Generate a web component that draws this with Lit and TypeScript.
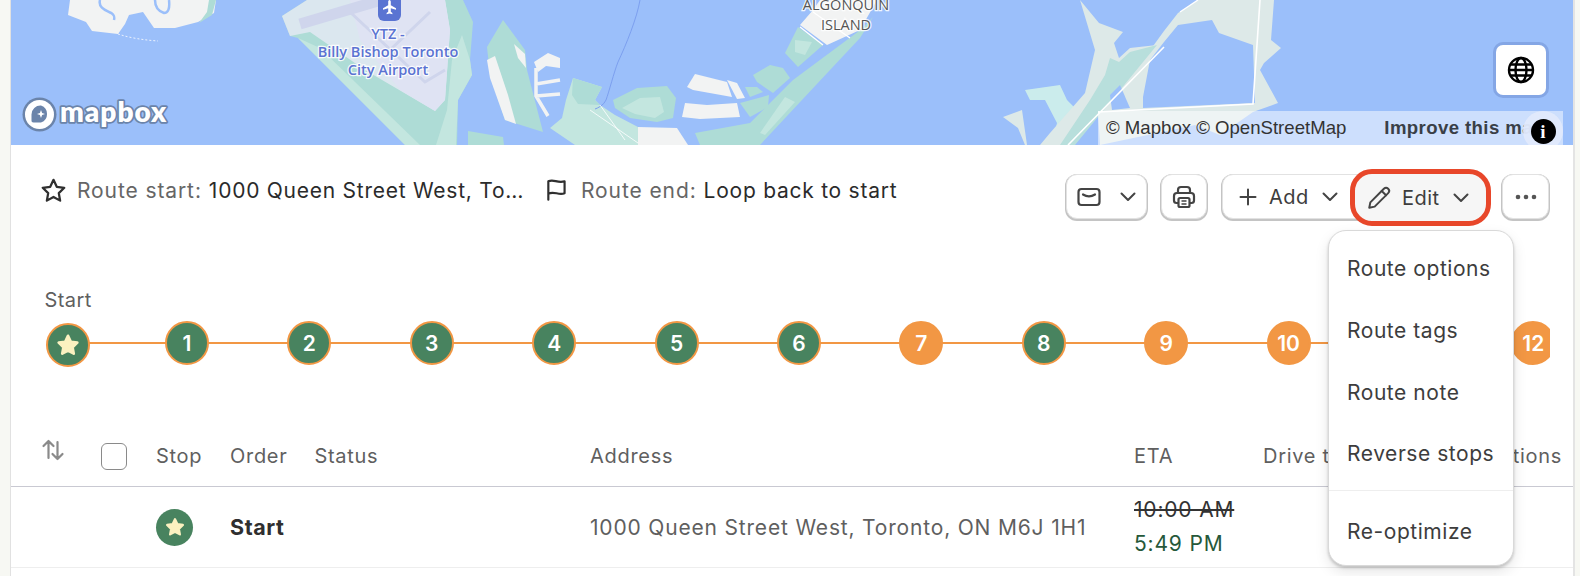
import { LitElement, html, css, svg } from "lit";
import { customElement } from "lit/decorators.js";

type Poly = [string, string];

const LAND = "#f2f3f3";
const GREEN = "#aedcd6";
const GREEN2 = "#c3e6df";
const PALE = "#dde9e8";
const WATER = "#9bbffa";

const SHAPES: Poly[] = [
  [LAND, "70,0 68,15 86,22 92,31 118,34 125,24 129,15 143,12 154,28 175,28 198,22 214,13 216,0"],
  [GREEN, "199,23 212,15 216,0 209,0 207,12"],
  [GREEN, "282,16 290,36 298,38 405,145 457,145 458,100 472,75 470,60 473,22 463,0 307,0"],
  [GREEN2, "298,38 405,145 420,145 320,48"],
  ["#dbe7ef", "282,16 290,36 310,32 365,70 435,111 445,100 450,30 445,0 307,0"],
  ["#dfe3f3", "350,0 445,0 450,30 445,100 435,111 400,90 360,40"],
  [GREEN2, "436,145 456,145 458,100 472,75 470,60 462,35 452,60 447,110"],
  [GREEN, "468,131 503,137 504,145 468,145"],
  [GREEN, "487,47 503,20 525,50 527,70 543,132 505,120 490,75"],
  [LAND, "487,60 495,56 508,95 516,124 505,120 490,78"],
  [LAND, "514,44 525,54 526,68 518,58"],
  [LAND, "534,62 548,53 560,58 560,68 546,66 538,72"],
  [GREEN2, "573,78 602,87 595,100 600,105 615,115 638,127 638,145 575,145 550,128 562,118 566,100"],
  [GREEN, "573,78 602,87 595,100 600,105 578,104 572,95"],
  [GREEN, "613,100 637,88 667,86 676,98 673,118 657,122 630,118 615,108"],
  [GREEN2, "622,108 640,98 660,97 664,112 655,118 635,114"],
  [LAND, "687,87 695,74 727,82 732,97 693,90"],
  [LAND, "727,80 737,83 745,98 737,99"],
  [LAND, "685,103 707,105 737,103 740,117 700,119 682,117"],
  [GREEN, "745,87 757,87 763,92 750,97"],
  [GREEN, "740,103 769,95 768,107 750,117"],
  [GREEN, "753,75 770,65 783,68 790,78 773,93 757,82"],
  [GREEN, "695,133 750,123 793,80 863,28 873,17 860,38 830,70 760,145 700,145"],
  [GREEN2, "760,133 785,97 795,102 765,135"],
  [LAND, "638,127 677,128 688,145 638,145"],
  [LAND, "800,25 813,10 820,0 877,0 860,30 827,45"],
  [GREEN, "798,27 823,45 798,67 785,53"],
  [GREEN2, "795,40 812,42 805,55 795,52"],
  ["#cbecec", "1025,90 1060,85 1067,100 1080,113 1072,145 1052,145 1057,123 1045,100 1030,100"],
  [PALE, "1003,117 1022,110 1027,145 1025,145 1018,128"],
  [PALE, "1164,31 1178,13 1198,0 1274,0 1271,40 1281,48 1264,63 1260,70 1278,103 1253,112 1100,112 1143,60"],
  [WATER, "1143,97 1150,60 1164,42 1178,25 1212,20 1219,33 1253,45 1255,103 1143,108"],
  [PALE, "1080,0 1099,23 1123,32 1114,43 1119,58 1130,48 1157,45 1068,145 1040,145 1050,133 1085,93 1095,50"],
  ["#b8dfdc", "1060,145 1090,100 1105,75 1110,58 1119,62 1130,52 1157,45 1075,145"],
  [WATER, "1110,95 1120,85 1130,108 1112,110"],
  [PALE, "1098,112 1253,112 1220,135 1195,125 1100,145"],
];

const MAP = svg`
  <svg class="mapsvg" viewBox="11 0 1562 145" width="1562" height="145" preserveAspectRatio="none">
    <rect x="11" y="0" width="1562" height="145" fill="${WATER}"></rect>
    ${SHAPES.map(([f, p]) => svg`<polygon fill="${f}" points="${p}"></polygon>`)}
    <path d="M100 0c-2 7 5 10 9 12 5 2 6 4 5 8M155 0c0 6 3 11 9 13 4 0 6-4 5-13" fill="none" stroke="${WATER}" stroke-width="2.500"></path>
    <path d="M118 34c12 4 26 6 40 7" fill="none" stroke="#fff" stroke-width="1" stroke-dasharray="2 2" opacity=".8"></path>
    <path d="M300 24 395 -4" stroke="#cfd5ec" stroke-width="11" fill="none"></path>
    <path d="M350 12 425 82 445 70M390 50 430 12" stroke="#cfd5ec" stroke-width="3" fill="none"></path>
    <path d="M536 68V96L548 116M536 84 560 80M536 96 560 94" stroke="${LAND}" stroke-width="3.500" fill="none"></path>
    <path d="M640 0c-3 18-14 45-22 62-4 10-9 30-12 38-2 5-8 8-11 9" stroke="#7c9fef" stroke-width="1" fill="none"></path>
    <path d="M590 110 638 143M600 105 625 140" stroke="#fff" stroke-width="1" fill="none" opacity=".8"></path>
    <path d="M800 27 823 45M813 12 850 38" stroke="#fff" stroke-width="1.400" fill="none"></path>
    <path d="M1068 145 1164 47M1098 112 1253 104 1260 0" stroke="#fff" stroke-width="1.600" fill="none"></path>
    <path d="M1180 12 1198 0" stroke="#fff" stroke-width="1.400" fill="none"></path>
    <rect x="378" y="-7" width="23" height="28" rx="6" fill="#5a74d2"></rect>
    <path d="M389.500 0c1 0 1.300 1 1.300 2v3.200l5.200 3v1.600l-5.200-1.500v3.400l1.600 1.300v1.200l-2.900-.8-2.900.8v-1.200l1.600-1.300V8.300L383 9.800V8.200l5.200-3V2c0-1 .3-2 1.300-2z" fill="#fff"></path>
    <g class="airport">
      <text x="388" y="39">YTZ -</text>
      <text x="388" y="57">Billy Bishop Toronto</text>
      <text x="388" y="75">City Airport</text>
    </g>
    <g class="island">
      <text x="846" y="10">ALGONQUIN</text>
      <text x="846" y="30">ISLAND</text>
    </g>
    <circle cx="39.500" cy="114.500" r="17" fill="#6b84aa"></circle>
    <circle cx="39.500" cy="114.500" r="14.500" fill="#fff"></circle>
    <path d="M41 105.500a9 9 0 0 1 0 17H33.500c-1.500 0-2-1-2-2v-6a9 9 0 0 1 9.500-9z" fill="#6b84aa"></path>
    <path d="M41 110l1.100 2.900 2.900 1.100-2.900 1.100-1.100 2.900-1.100-2.900-2.900-1.100 2.900-1.100z" fill="#fff"></path>
    <text class="mapbox" x="60" y="122">mapbox</text>
  </svg>
`;

const starOutline = html`<svg width="27" height="27" viewBox="0 0 24 24" fill="none" stroke="#2f2f2f" stroke-width="2" stroke-linejoin="round"><path d="M12 2.500l2.900 6.200 6.700.9-4.900 4.700 1.200 6.700-5.900-3.300-5.900 3.300 1.200-6.700L2.400 9.600l6.700-.9z"></path></svg>`;
const flag = html`<svg width="26" height="26" viewBox="0 0 24 24" fill="none" stroke="#2f2f2f" stroke-width="2" stroke-linecap="round" stroke-linejoin="round"><path d="M4 21V4c5-2.600 8 2 15 0v11c-5.500 2.300-10-2.500-15 .5"></path></svg>`;
const chevron = html`<svg class="chev" width="16" height="10" viewBox="0 0 16 10" fill="none" stroke="#444" stroke-width="2" stroke-linecap="round" stroke-linejoin="round"><path d="M1.500 1.500 8 8l6.500-6.500"></path></svg>`;
const mail = html`<svg width="24" height="20" viewBox="0 0 24 20" fill="none" stroke="#444" stroke-width="2.200" stroke-linejoin="round" stroke-linecap="round"><rect x="1.500" y="2" width="21" height="16" rx="3"></rect><path d="M6 7.500c4 2.600 8 2.600 12 0"></path></svg>`;
const printer = html`<svg width="24" height="24" viewBox="0 0 24 24" fill="none" stroke="#444" stroke-width="2.200" stroke-linejoin="round"><path d="M6 8V5a3 3 0 0 1 3-3h6a3 3 0 0 1 3 3v3"></path><path d="M6 18H4.500A2.500 2.500 0 0 1 2 15.500V11a3 3 0 0 1 3-3h14a3 3 0 0 1 3 3v4.500a2.500 2.500 0 0 1-2.500 2.500H18"></path><rect x="6.500" y="13" width="11" height="9" rx="1.500"></rect><path d="M9.500 16h5M9.500 19h5" stroke-width="1.600"></path></svg>`;
const plus = html`<svg width="18" height="18" viewBox="0 0 18 18" stroke="#444" stroke-width="2" stroke-linecap="round"><path d="M9 1.500v15M1.500 9h15"></path></svg>`;
const pencil = html`<svg width="26" height="26" viewBox="0 0 24 24" fill="none" stroke="#444" stroke-width="1.800" stroke-linejoin="round" stroke-linecap="round"><path d="M3 21l1-5L16.500 3.500a2.800 2.800 0 0 1 4 4L8 20z"></path><path d="M14.500 5.500l4 4"></path></svg>`;
const dots = html`<svg width="24" height="6" viewBox="0 0 24 6" fill="#555"><circle cx="4" cy="3" r="2.300"></circle><circle cx="12" cy="3" r="2.300"></circle><circle cx="20" cy="3" r="2.300"></circle></svg>`;
const sort = html`<svg width="24" height="24" viewBox="0 0 24 24" fill="none" stroke="#8a8a8a" stroke-width="2.200" stroke-linecap="round" stroke-linejoin="round"><path d="M7.500 20V3M2.500 8l5-5 5 5M16.500 4v17M11.500 16l5 5 5-5"></path></svg>`;
const kebab = html`<svg width="6" height="26" viewBox="0 0 6 26" fill="#777"><circle cx="3" cy="3" r="2.600"></circle><circle cx="3" cy="13" r="2.600"></circle><circle cx="3" cy="23" r="2.600"></circle></svg>`;
const globe = html`<svg width="28" height="28" viewBox="0 0 28 28" fill="none" stroke="#000" stroke-width="2.400"><circle cx="14" cy="14" r="12"></circle><ellipse cx="14" cy="14" rx="5.500" ry="12"></ellipse><path d="M2 14h24M3.500 8.500h21M3.500 19.500h21"></path></svg>`;
const solidStar = (s: number) => html`<svg width="${s}" height="${s}" viewBox="0 0 24 24" fill="#fbf1c0" stroke="#fbf1c0" stroke-width="2.500" stroke-linejoin="round"><path d="M12 3.500l2.600 5.500 6 .8-4.400 4.200 1.100 6-5.300-2.900-5.300 2.900 1.100-6-4.400-4.200 6-.8z"></path></svg>`;

const STOPS: [string, boolean][] = [
  ["1", false], ["2", false], ["3", false], ["4", false], ["5", false], ["6", false],
  ["7", true], ["8", false], ["9", true], ["10", true], ["11", true], ["12", true],
];

@customElement("app-root")
export class AppRoot extends LitElement {
  static styles = css`
    :host { display: block; width: 1580px; height: 576px; overflow: hidden; background: #f7f8f3; font-family: Inter, "Liberation Sans", sans-serif; color: #333; }
    .panel { position: relative; margin-left: 10px; width: 1562px; height: 576px; background: #fff; border-left: 1.500px solid #e1e1e1; border-right: 2px solid #e4e4e4; box-sizing: content-box; }
    .map { position: relative; height: 145px; overflow: hidden; background: #9bbffa; }
    .mapsvg { display: block; }
    .airport text { font: 600 14.500px "Open Sans", sans-serif; fill: #5b73d2; text-anchor: middle; paint-order: stroke; stroke: #fff; stroke-width: 2.500px; stroke-opacity: .85; }
    .island text { font: 500 14.500px "Open Sans", sans-serif; fill: #555; text-anchor: middle; paint-order: stroke; stroke: #fff; stroke-width: 2.500px; stroke-opacity: .85; }
    .mapbox { font: 800 28px Lato, sans-serif; fill: #fff; paint-order: stroke; stroke: #6b84aa; stroke-width: 3.500px; stroke-linejoin: round; letter-spacing: 1px; }
    .attrib { position: absolute; right: 10px; bottom: 0; width: 465px; height: 34px; box-sizing: border-box; padding-left: 8px; display: flex; align-items: center; gap: 38px; overflow: hidden; background: rgba(255,255,255,.5); font: 18.600px "Liberation Sans", sans-serif; color: #333; white-space: nowrap; }
    .attrib b { color: #3a3f47; letter-spacing: .4px; }
    .info { position: absolute; right: 10px; bottom: -6px; width: 40px; height: 40px; border-radius: 50%; background: rgba(225,233,252,.96); display: flex; align-items: center; justify-content: center; }
    .info i { width: 25px; height: 25px; border-radius: 50%; background: #000; color: #fff; font: 700 19px/25px "Liberation Serif", serif; text-align: center; }
    .globe { position: absolute; right: 27px; top: 45px; width: 50px; height: 50px; box-sizing: border-box; border-radius: 7px; background: #fff; box-shadow: 0 0 0 3px rgba(90,120,190,.35); display: flex; align-items: center; justify-content: center; }

    .toolbar { display: flex; justify-content: space-between; padding: 29px 24px 0 29px; height: 45px; }
    .route { display: flex; align-items: center; height: 32px; font-size: 21px; white-space: nowrap; }
    .route .ic { display: flex; }
    .r1 .ic { margin-right: 10px; }
    .r2 .ic { margin-right: 11px; }
    .route .lbl { color: #666; margin-right: 7px; letter-spacing: .9px; }
    .route .val { color: #2b2b2b; letter-spacing: .75px; }
    .r1 { width: 504px; }
    .r1 .val { overflow: hidden; text-overflow: ellipsis; width: 318px; }
    .routes { display: flex; }
    .actions { display: flex; align-items: center; }
    .btn { height: 45px; box-sizing: border-box; display: flex; align-items: center; background: #fff; border: 1px solid #e2e2e2; border-radius: 11px; box-shadow: 0 1px 0 1px #c4c4c4; font-size: 20px; letter-spacing: .5px; color: #3d3d3d; }
    .mailbtn { width: 81px; padding-left: 10px; gap: 19px; margin-right: 14px; }
    .printbtn { width: 46px; justify-content: center; margin-right: 15px; }
    .addbtn { width: 140px; padding-left: 16px; border-radius: 11px 0 0 11px; }
    .addbtn span { margin: 0 13px 0 12px; }
    .editwrap { margin-left: -12px; margin-right: 11px; margin-top: 2px; position: relative; z-index: 1; }
    .editbtn { width: 141px; height: 57px; border: 5px solid #e8472a; border-radius: 22px; background: #f6f6f6; box-shadow: none; padding-left: 11px; }
    .editbtn span { margin: 0 13px 0 10px; }
    .morebtn { width: 47px; justify-content: center; }

    .timeline { margin-top: 71px; padding-left: 33.500px; width: 1505px; overflow: hidden; box-sizing: content-box; }
    .tl-label { font-size: 20px; letter-spacing: .4px; color: #5f5f5f; height: 20px; line-height: 20px; }
    .track { position: relative; display: flex; margin-top: 9px; height: 48px; align-items: center; }
    .line { position: absolute; left: 24px; right: 0; top: 23px; height: 2px; background: #f29744; }
    .dot { position: relative; flex: none; width: 44px; height: 44px; box-sizing: border-box; border-radius: 50%; display: flex; align-items: center; justify-content: center; background: #48835f; color: #fff; border: 2px solid #f29744; font-size: 21px; font-weight: 600; margin-right: 78.400px; }
    .dot.late { background: #f29744; }
    .dot.first { margin: 3px 75px 0 1.500px; }

    .row { display: grid; grid-template-columns: 60px 55px 74px 84.500px 275.500px 544px 129px 220px; align-items: center; padding-left: 30px; white-space: nowrap; }
    .head { margin-top: 59px; height: 61px; border-bottom: 1.500px solid #c9c9d2; font-size: 20px; letter-spacing: .7px; color: #5f5f5f; box-sizing: border-box; }
    .sorticon { display: flex; margin-top: -12px; }
    .check { width: 26px; height: 27px; box-sizing: border-box; border: 1.500px solid #8a8a8a; border-radius: 6px; background: #fff; }
    .body { height: 81px; border-bottom: 1px solid #eee; font-size: 21px; letter-spacing: .82px; color: #5f5f5f; box-sizing: border-box; }
    .bigstar { width: 37px; height: 37px; border-radius: 50%; background: #48835f; display: flex; align-items: center; justify-content: center; }
    .strong { font-weight: 700; font-size: 21.500px; color: #2f2f2f; letter-spacing: .6px; }
    .eta { display: flex; flex-direction: column; gap: 12px; line-height: 22px; }
    .eta s { color: #333; }
    .eta span { color: #26583a; }
    .kebab { display: flex; justify-content: flex-end; padding-right: 32px; box-sizing: border-box; width: 261px; }
    .dh { display: flex; justify-content: space-between; width: 299px; }

    .menu { position: absolute; left: 1317px; top: 230px; width: 186px; height: 336px; box-sizing: border-box; z-index: 3; background: #fff; border: 1px solid #d9d9d9; border-radius: 18px; box-shadow: 0 2px 3px rgba(0,0,0,.18), 0 6px 14px rgba(0,0,0,.1); padding: 7px 0 0; font-size: 21px; letter-spacing: .55px; color: #3d3d3d; }
    .item { height: 61.700px; padding-left: 18px; display: flex; align-items: center; }
    .sep { border-top: 1px solid #eee; margin-top: 5.500px; }
    .sep + .item { height: 78px; margin-top: 1px; }
  `;

  render() {
    return html`
      <div class="panel">
        <div class="map">
          ${MAP}
          <div class="globe">${globe}</div>
          <div class="attrib"><span>© Mapbox © OpenStreetMap</span><b>Improve this map</b></div>
          <div class="info"><i>i</i></div>
        </div>
        <div class="toolbar">
          <div class="routes">
            <div class="route r1">
              <span class="ic">${starOutline}</span><span class="lbl">Route start:</span><span class="val">1000 Queen Street West, Toronto</span>
            </div>
            <div class="route r2">
              <span class="ic">${flag}</span><span class="lbl">Route end:</span><span class="val">Loop back to start</span>
            </div>
          </div>
          <div class="actions">
            <div class="btn mailbtn">${mail}${chevron}</div>
            <div class="btn printbtn">${printer}</div>
            <div class="btn addbtn">${plus}<span>Add</span>${chevron}</div>
            <div class="editwrap"><div class="btn editbtn">${pencil}<span>Edit</span>${chevron}</div></div>
            <div class="btn morebtn">${dots}</div>
          </div>
        </div>
        <div class="timeline">
          <div class="tl-label">Start</div>
          <div class="track">
            <div class="line"></div>
            <div class="dot first">${solidStar(26)}</div>
            ${STOPS.map(([n, late]) => html`<div class="dot ${late ? "late" : ""}">${n}</div>`)}
          </div>
        </div>
        <div class="row head">
          <div class="sorticon">${sort}</div>
          <div class="check"></div>
          <div>Stop</div><div>Order</div><div>Status</div><div>Address</div><div>ETA</div>
          <div class="dh"><span>Drive time</span><span>Actions</span></div>
        </div>
        <div class="row body">
          <div></div><div></div>
          <div class="bigstar">${solidStar(22)}</div>
          <div class="strong">Start</div><div></div>
          <div>1000 Queen Street West, Toronto, ON M6J 1H1</div>
          <div class="eta"><s>10:00 AM</s><span>5:49 PM</span></div>
          <div class="kebab">${kebab}</div>
        </div>
        <div class="menu">
          <div class="item">Route options</div>
          <div class="item">Route tags</div>
          <div class="item">Route note</div>
          <div class="item">Reverse stops</div>
          <div class="sep"></div>
          <div class="item">Re-optimize</div>
        </div>
      </div>
    `;
  }
}
